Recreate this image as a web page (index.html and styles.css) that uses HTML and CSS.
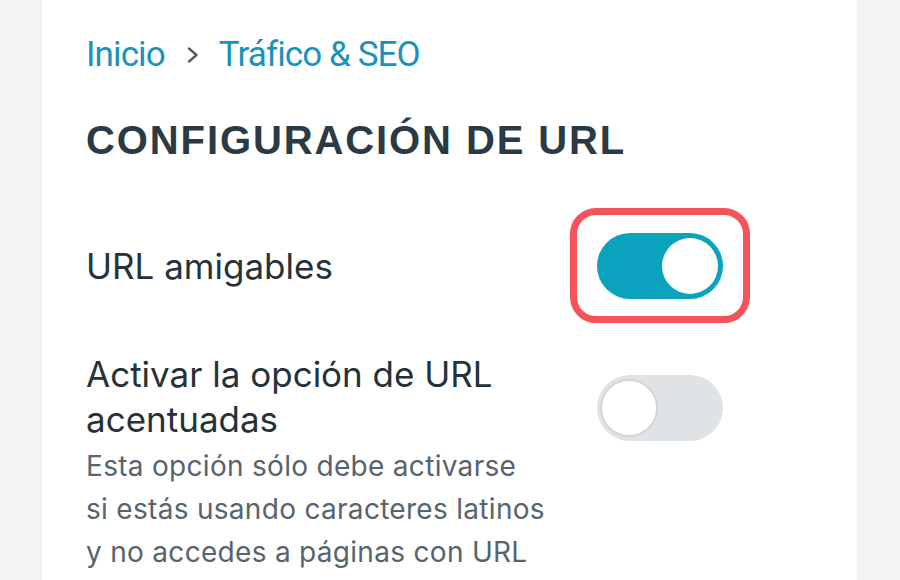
FILE: index.html
```html
<!DOCTYPE html>
<html lang="es">
<head>
<meta charset="utf-8">
<title>Configuración de URL</title>
<link rel="stylesheet" href="styles.css">
</head>
<body>
<main class="card">
  <nav class="crumbs">
    <a class="crumb" href="#">Inicio</a>
    <svg class="chev" viewBox="0 0 12 16" width="12" height="16"><path d="M2 1.5 L9.5 8 L2 14.5" fill="none" stroke="#555d63" stroke-width="2.4" stroke-linecap="round" stroke-linejoin="round"/></svg>
    <a class="crumb" href="#">Tráfico &amp; SEO</a>
  </nav>
  <h1 class="title">CONFIGURACIÓN DE URL</h1>
  <section class="setting first">
    <div class="setting-head">
      <span class="label">URL amigables</span>
      <div class="toggle-wrap highlighted">
        <span class="toggle on"><span class="knob"></span></span>
      </div>
    </div>
  </section>
  <section class="setting second">
    <div class="setting-head">
      <span class="label">Activar la opción de URL acentuadas</span>
      <div class="toggle-wrap">
        <span class="toggle off"><span class="knob"></span></span>
      </div>
    </div>
    <p class="desc">Esta opción sólo debe activarse<br>si estás usando caracteres latinos<br>y no accedes a páginas con URL</p>
  </section>
</main>
</body>
</html>
```

FILE: styles.css
```css
html, body {
  margin: 0;
  padding: 0;
}
body {
  background: #f5f5f5;
  width: 900px;
  height: 580px;
  overflow: hidden;
  font-family: "Inter", "Noto Sans", sans-serif;
}
.card {
  margin: -24px 0 0 42px;
  width: 815px;
  height: 640px;
  box-sizing: border-box;
  background: #ffffff;
  border-radius: 24px;
  box-shadow: 0 0 18px rgba(0, 0, 0, 0.035);
  padding: 54px 0 0 44px;
}
.crumbs {
  display: flex;
  align-items: center;
  height: 48px;
}
.crumb {
  font-family: "Roboto", "Liberation Sans", sans-serif;
  font-size: 35px;
  letter-spacing: -0.9px;
  color: #1a92bb;
  text-decoration: none;
}
.chev {
  display: block;
  margin: 2px 20px 0 22px;
}
.title {
  margin: 38px 0 0 0;
  font-family: "Liberation Sans", Arial, sans-serif;
  font-weight: 700;
  font-size: 40px;
  letter-spacing: 1.9px;
  color: #2b3a44;
  line-height: 48px;
}
.setting {
  width: 637px;
}
.setting.first {
  margin-top: 69px;
}
.setting.second {
  margin-top: 53px;
}
.setting-head {
  display: flex;
  align-items: center;
  justify-content: space-between;
}
.label {
  width: 440px;
  font-size: 35px;
  line-height: 45px;
  color: #26323a;
}
.toggle-wrap {
  display: flex;
}
.second .toggle-wrap {
  margin-top: 21px;
}
.toggle-wrap.highlighted {
  padding: 18px 20px 17px 20px;
  margin: -25px -27px -24px -27px;
  border: 7px solid #f4535a;
  border-radius: 26px;
}
.toggle {
  display: flex;
  align-items: center;
  width: 126px;
  height: 66px;
  box-sizing: border-box;
  border-radius: 33px;
  padding: 5px;
}
.toggle.on {
  background: #0aa2bd;
  justify-content: flex-end;
}
.toggle.off {
  background: #dfe3e6;
  padding: 3px;
  justify-content: flex-start;
}
.knob {
  width: 56px;
  height: 56px;
  border-radius: 50%;
  background: #ffffff;
  box-sizing: border-box;
}
.toggle.off .knob {
  width: 58px;
  height: 58px;
  border: 2px solid #d3d7da;
}
.desc {
  margin: 3px 0 0 0;
  width: 480px;
  font-size: 28px;
  line-height: 43px;
  letter-spacing: 0.3px;
  color: #56646d;
}
```
